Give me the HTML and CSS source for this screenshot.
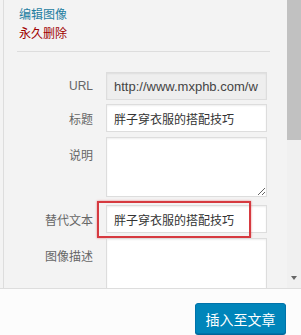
FILE: index.html
```html
<!DOCTYPE html>
<html lang="zh">
<head>
  <meta charset="UTF-8">
  <title>附件详情</title>
  <link rel="stylesheet" href="styles.css">
</head>
<body>
  <div class="frame">
    <div class="panel">
      <div class="details">
        <div class="actions">
          <a href="#" class="edit-link">编辑图像</a>
          <a href="#" class="delete-link">永久删除</a>
        </div>
        <hr class="divider">

        <div class="field field-url">
          <span class="label">URL</span>
          <input class="text url" type="text" readonly value="http://www.mxphb.com/w">
        </div>
        <div class="field field-title">
          <span class="label">标题</span>
          <input class="text" type="text" value="胖子穿衣服的搭配技巧">
        </div>
        <div class="field field-caption multi">
          <span class="label">说明</span>
          <textarea class="text area"></textarea>
        </div>
        <div class="field field-alt">
          <span class="label">替代文本</span>
          <input class="text" type="text" value="胖子穿衣服的搭配技巧">
          <div class="highlight"></div>
        </div>
        <div class="field field-desc multi">
          <span class="label">图像描述</span>
          <textarea class="text area"></textarea>
        </div>
      </div>
      <div class="scrollbar">
        <div class="thumb"></div>
        <div class="arrow"></div>
      </div>
    </div>
    <div class="toolbar">
      <button class="insert-btn">插入至文章</button>
    </div>
  </div>
</body>
</html>
```

FILE: styles.css
```css
body {
  margin: 0;
  font-family: "Liberation Sans", "Noto Sans CJK SC", sans-serif;
  background-color: #fcfcfc;
  overflow: hidden;
}

.frame {
  height: 335px;
  display: flex;
  flex-direction: column;
}

.panel {
  height: 288px;
  display: flex;
  background-color: #f3f3f3;
  border-bottom: 1px solid #dddddd;
  overflow: hidden;
}

.details {
  flex: 1;
  margin-left: 3px;
  border-left: 1px solid #dddddd;
  padding-top: 6px;
}

.actions a {
  display: block;
  padding-left: 15px;
  font-size: 12px;
  line-height: 19px;
  text-decoration: none;
}

.edit-link {
  color: #1e7ea1;
}

.delete-link {
  color: #a00000;
}

.divider {
  height: 0;
  border: 0;
  border-top: 1px solid #dddddd;
  margin: 7px 17px 0 13px;
}

.field {
  display: flex;
  align-items: center;
  position: relative;
}

.field.multi {
  align-items: flex-start;
}

.label {
  width: 89px;
  margin-right: 13px;
  text-align: right;
  font-size: 12px;
  color: #666;
}

.multi .label {
  padding-top: 9px;
}

.text {
  width: 161px;
  height: 28px;
  box-sizing: border-box;
  margin: 0;
  padding: 0 7px;
  border: 1px solid #dddddd;
  background-color: #fff;
  box-shadow: inset 0 1px 2px rgba(0,0,0,0.07);
  font-family: "Liberation Sans", "Noto Sans CJK SC", sans-serif;
  font-size: 12px;
  color: #333;
  outline: none;
}

.text.url {
  background-color: #eeeeee;
  font-size: 13px;
  color: #444;
}

.text.area {
  height: 60px;
  resize: vertical;
}

.field-url { margin-top: 20px; }
.field-title { margin-top: 4px; }
.field-caption { margin-top: 5px; }
.field-alt { margin-top: 8px; }
.field-desc { margin-top: 5px; }

.highlight {
  position: absolute;
  left: 93px;
  top: -4px;
  width: 154px;
  height: 37px;
  box-sizing: border-box;
  border: 2px solid #d63a40;
  box-shadow: 0 0 2px rgba(214,58,64,0.6);
  pointer-events: none;
}

.scrollbar {
  width: 14px;
  display: flex;
  flex-direction: column;
  background-color: #f0f0f0;
}

.thumb {
  height: 140px;
  background-color: #c1c1c1;
}

.arrow {
  margin-top: auto;
  margin-bottom: 8px;
  align-self: center;
  width: 0;
  border-left: 3px solid transparent;
  border-right: 3px solid transparent;
  border-top: 4px solid #666;
}

.toolbar {
  flex: 1;
  display: flex;
  justify-content: flex-end;
  align-items: flex-start;
  padding: 14px 15px 0 0;
}

.insert-btn {
  width: 91px;
  height: 31px;
  background-color: #0085ba;
  border: 1px solid #0073aa;
  border-radius: 3px;
  box-shadow: 0 1px 0 #006799;
  color: white;
  font-family: "Liberation Sans", "Noto Sans CJK SC", sans-serif;
  font-size: 14px;
  cursor: pointer;
}
```
